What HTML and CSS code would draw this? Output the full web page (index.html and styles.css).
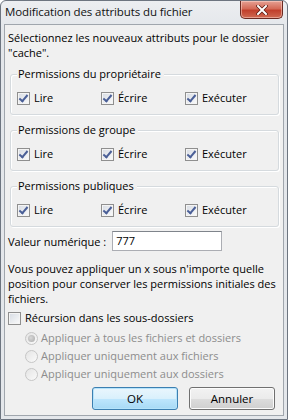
FILE: index.html
```html
<!DOCTYPE html>
<html lang="fr">
<head>
    <meta charset="UTF-8">
    <title>Modification des attributs du fichier</title>
    <link rel="stylesheet" href="styles.css">
</head>
<body>
    <div class="window">
        <div class="titlebar">
            <span class="title">Modification des attributs du fichier</span>
            <button class="close" aria-label="Fermer">
                <svg width="12" height="10" viewBox="0 0 12 10">
                    <path d="M2 1 L10 9 M10 1 L2 9" stroke="#5a1a10" stroke-width="3.4" stroke-linecap="square"/>
                    <path d="M2 1 L10 9 M10 1 L2 9" stroke="#fff" stroke-width="2" stroke-linecap="square"/>
                </svg>
            </button>
        </div>
        <div class="client">
            <p class="intro">Sélectionnez les nouveaux attributs pour le dossier "cache".</p>

            <div class="group">
                <div class="legend">Permissions du propriétaire</div>
                <div class="checks">
                    <label class="check"><span class="box on"></span>Lire</label>
                    <label class="check"><span class="box on"></span>Écrire</label>
                    <label class="check"><span class="box on"></span>Exécuter</label>
                </div>
            </div>

            <div class="group">
                <div class="legend">Permissions de groupe</div>
                <div class="checks">
                    <label class="check"><span class="box on"></span>Lire</label>
                    <label class="check"><span class="box on"></span>Écrire</label>
                    <label class="check"><span class="box on"></span>Exécuter</label>
                </div>
            </div>

            <div class="group">
                <div class="legend">Permissions publiques</div>
                <div class="checks">
                    <label class="check"><span class="box on"></span>Lire</label>
                    <label class="check"><span class="box on"></span>Écrire</label>
                    <label class="check"><span class="box on"></span>Exécuter</label>
                </div>
            </div>

            <div class="numeric">
                <span>Valeur numérique :</span>
                <div class="field">777</div>
            </div>

            <p class="hint">Vous pouvez appliquer un x sous n'importe quelle position pour conserver les permissions initiales des fichiers.</p>

            <label class="check recurse"><span class="box"></span>Récursion dans les sous-dossiers</label>

            <div class="radios">
                <label class="radio"><span class="dot on"></span>Appliquer à tous les fichiers et dossiers</label>
                <label class="radio"><span class="dot"></span>Appliquer uniquement aux fichiers</label>
                <label class="radio"><span class="dot"></span>Appliquer uniquement aux dossiers</label>
            </div>

            <div class="buttons">
                <button class="btn default">OK</button>
                <button class="btn">Annuler</button>
            </div>
        </div>
    </div>
</body>
</html>
```

FILE: styles.css
```css
html, body {
    margin: 0;
    padding: 0;
}

body {
    width: 288px;
    height: 420px;
    background-color: #fff;
    font-family: "Open Sans", "Noto Sans", sans-serif;
    font-size: 11px;
    color: #000;
}

.window {
    box-sizing: border-box;
    width: 288px;
    height: 420px;
    display: flex;
    flex-direction: column;
    border: 1px solid #6d7580;
    border-radius: 6px 6px 0 0;
    background: linear-gradient(#eceef1, #e3e6ea 30px, #e4e7eb);
}

.titlebar {
    height: 22px;
    display: flex;
    align-items: flex-start;
    justify-content: space-between;
}

.title {
    padding: 3px 0 0 4px;
    font-size: 11.5px;
    letter-spacing: -0.1px;
    color: #111;
}

.close {
    width: 43px;
    height: 18px;
    margin: 0 4px 0 0;
    padding: 0;
    border: 1px solid #6b2a22;
    border-top: none;
    border-radius: 0 0 5px 5px;
    background: linear-gradient(#e6a194, #d46a57 45%, #c1402c 55%, #cf6a52);
    box-shadow: inset 0 0 0 1px rgba(255, 220, 210, 0.5);
    display: flex;
    align-items: center;
    justify-content: center;
}

.client {
    flex: 1;
    margin: 1px 3px 3px 3px;
    border: 1px solid #a0a6ad;
    background-color: #f0f0f0;
    padding: 0 4px 0 3px;
    display: flex;
    flex-direction: column;
}

.intro {
    margin: 5px 0 0 0;
    line-height: 15px;
}

.group {
    box-sizing: border-box;
    height: 41px;
    margin: 14px 0 0 2px;
    border: 1px solid #d5dade;
    border-radius: 3px;
    box-shadow: 1px 1px 0 #fff inset, 1px 1px 0 #fff;
    padding: 0 0 0 6px;
}

.group + .group {
    margin-top: 15px;
}

.legend {
    margin: -9px 0 0 0;
    padding: 0 3px 0 1px;
    background-color: #f0f0f0;
    width: max-content;
    line-height: 16px;
}

.checks {
    display: grid;
    grid-template-columns: 84px 84px 1fr;
    margin-top: 8px;
}

.check {
    display: flex;
    align-items: center;
    line-height: 16px;
}

.box {
    box-sizing: border-box;
    width: 13px;
    height: 13px;
    margin-right: 4px;
    border: 1px solid #8f8f8f;
    background: linear-gradient(135deg, #d6dbe3, #fbfbfb);
    box-shadow: inset 0 0 0 1px #f4f4f4;
    position: relative;
}

.box.on::after {
    content: "";
    position: absolute;
    left: 3px;
    top: 0px;
    width: 3px;
    height: 7px;
    border: solid #4a5f97;
    border-width: 0 2px 2px 0;
    transform: rotate(40deg);
}

.numeric {
    display: flex;
    align-items: center;
    margin-top: 4px;
    height: 20px;
}

.field {
    box-sizing: border-box;
    margin-left: 6px;
    width: 110px;
    height: 20px;
    border: 1px solid #abadb3;
    border-top-color: #7f848b;
    background-color: #fff;
    padding: 1px 0 0 3px;
    line-height: 16px;
}

.hint {
    margin: 10px 0 0 0;
    line-height: 15px;
}

.recurse {
    margin-top: 4px;
}

.radios {
    margin: 4px 0 0 17px;
    display: flex;
    flex-direction: column;
    gap: 2px;
    color: #8d8d8d;
}

.radio {
    display: flex;
    align-items: center;
    line-height: 16px;
}

.dot {
    box-sizing: border-box;
    width: 13px;
    height: 13px;
    margin-right: 3px;
    border-radius: 50%;
    border: 1px solid #c6c6c6;
    background: linear-gradient(135deg, #e4e4e4, #fafafa);
    position: relative;
}

.dot.on::after {
    content: "";
    position: absolute;
    left: 2px;
    top: 2px;
    width: 7px;
    height: 7px;
    border-radius: 50%;
    background: radial-gradient(circle at 40% 40%, #d8d8d8, #a9a9a9);
}

.buttons {
    display: flex;
    justify-content: flex-end;
    gap: 11px;
    margin: 5px 4px 0 0;
}

.btn {
    width: 86px;
    height: 23px;
    border: 1px solid #707070;
    border-radius: 3px;
    background: linear-gradient(#f2f2f2, #ebebeb 50%, #dddddd 51%, #cfcfcf);
    box-shadow: inset 0 0 0 1px #fcfcfc;
    font-family: inherit;
    font-size: 11.5px;
    color: #000;
    padding: 0;
}

.btn.default {
    border-color: #3c7fb1;
    background: linear-gradient(#eaf6fd, #d9f0fc 50%, #bee6fd 51%, #a7d9f5);
    box-shadow: inset 0 0 0 1px #b5e3fb;
}
```
